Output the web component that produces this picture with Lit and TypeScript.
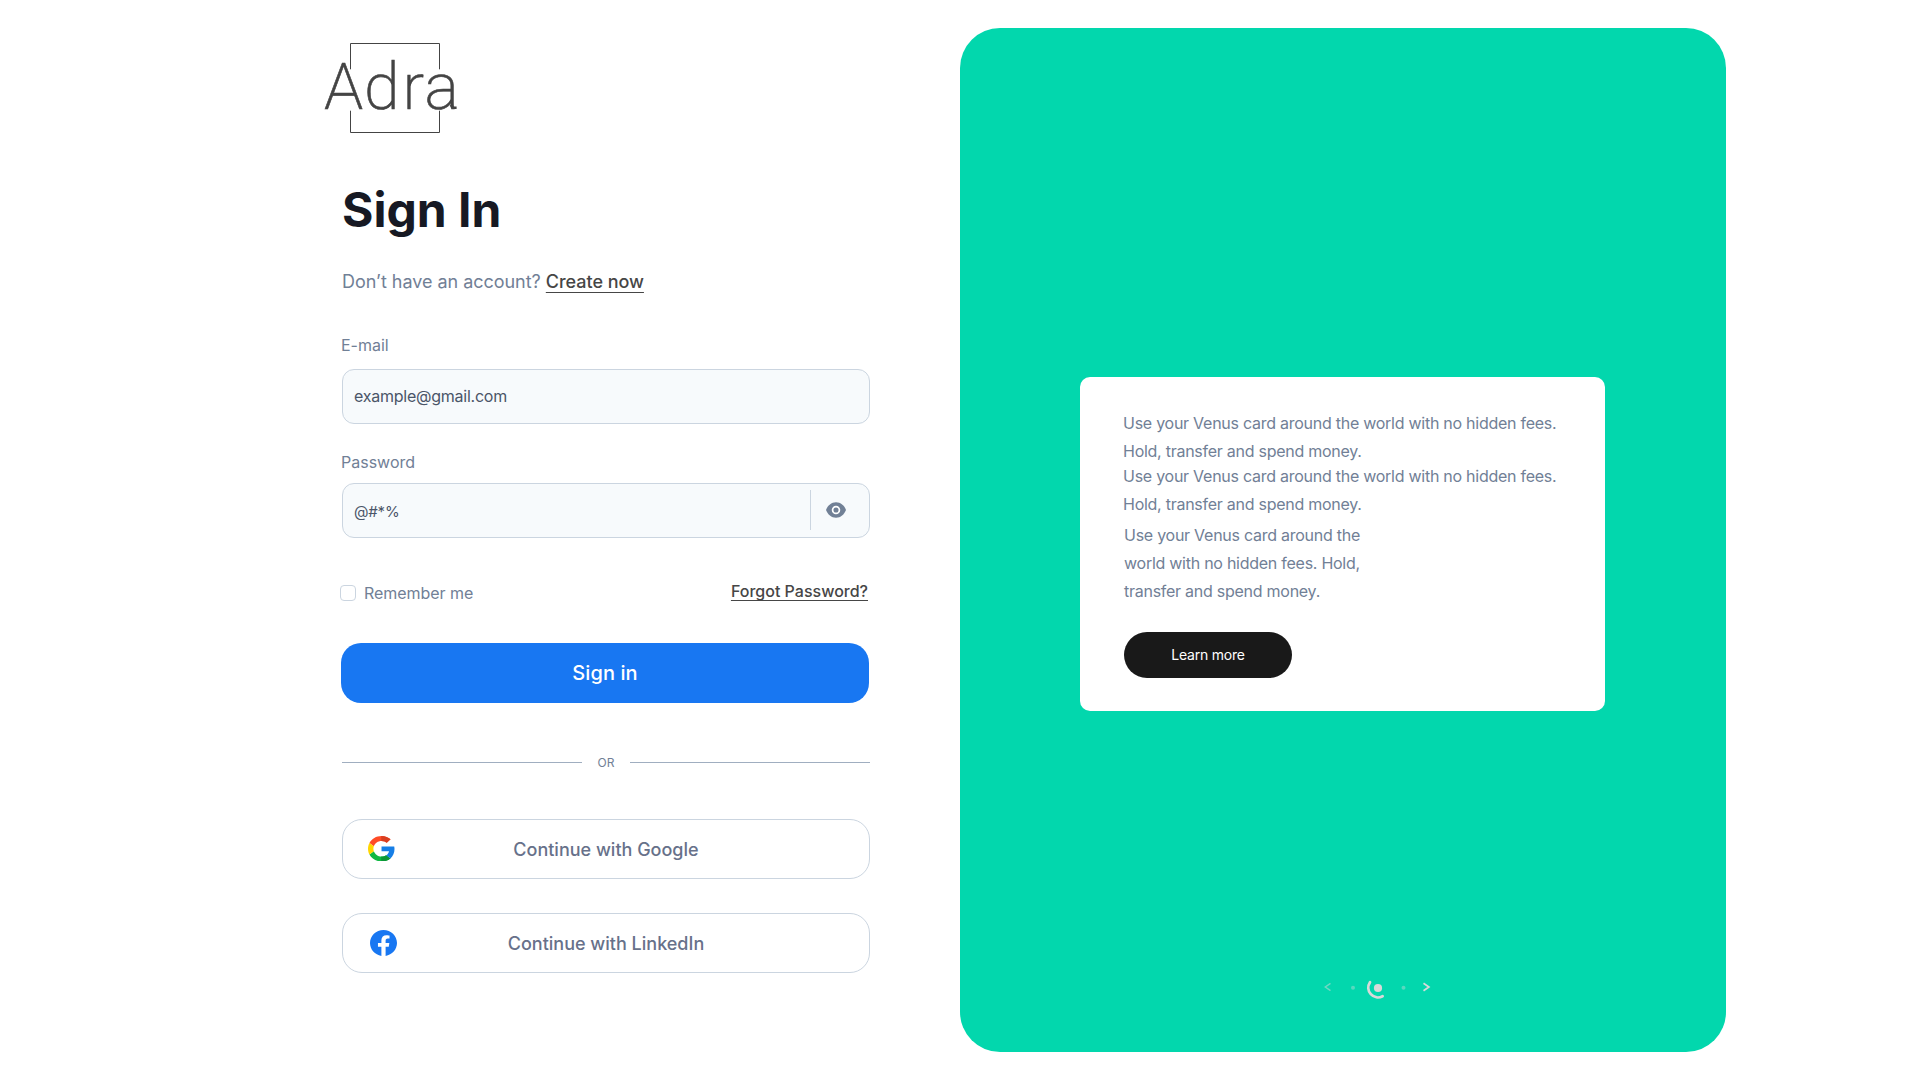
import { LitElement, html, css } from "lit";
import { customElement } from "lit/decorators.js";

const FEES = "Use your Venus card around the world with no hidden fees. Hold, transfer and spend money.";

const RED_ARC =
  "M16.2864 7.4133C18.9689 7.4133 20.7784 8.54885 21.8102 9.4978L25.8419 5.64C23.3658 3.38445 20.1435 2 16.2864 2C10.699 2 5.8736 5.1422 3.52441 9.7155L8.14345 13.2311C9.30229 9.85555 12.5086 7.4133 16.2864 7.4133Z";
const GREEN_ARC =
  "M16.2863 29.9998C20.1434 29.9998 23.3814 28.7553 25.7466 26.6086L21.2386 23.1863C20.0323 24.0108 18.4132 24.5863 16.2863 24.5863C12.5086 24.5863 9.30225 22.1441 8.15929 18.7686L3.52441 22.2841C5.87359 26.8574 10.699 29.9998 16.2863 29.9998Z";

const googleIcon = html`
  <svg class="google" viewBox="2 2 28 28" preserveAspectRatio="none" aria-hidden="true">
    <defs>
      <clipPath id="right"><rect x="16" y="0" width="16" height="32"></rect></clipPath>
    </defs>
    <path d=${RED_ARC} fill="#FF4B26"></path>
    <path d=${RED_ARC} fill="#D93F21" clip-path="url(#right)"></path>
    <path d=${GREEN_ARC} fill="#0FB842"></path>
    <path d=${GREEN_ARC} fill="#0C9637" clip-path="url(#right)"></path>
    <path fill="#FFD500" d="M8.15964 18.769C7.85806 17.8979 7.68352 16.9645 7.68352 16.0001C7.68352 15.0356 7.85806 14.1023 8.14377 13.2312L3.52475 9.71556C2.55654 11.6134 2.00098 13.7445 2.00098 16.0001C2.00098 18.2556 2.55654 20.3867 3.52475 22.2845L8.15964 18.769Z"></path>
    <path fill="#167EE6" d="M30.0014 16.3109C30.0014 15.1598 29.9061 14.3198 29.6998 13.4487H16.2871V18.6442H24.1601C24.0014 19.9354 23.1442 21.8798 21.2394 23.1864L25.7474 26.6087C28.4458 24.1665 30.0014 20.5731 30.0014 16.3109Z"></path>
  </svg>`;

const facebookIcon = html`
  <svg class="facebook" viewBox="0 0 24 24" preserveAspectRatio="none" aria-hidden="true">
    <path fill="#1877F2" d="M24 12.073c0-6.627-5.373-12-12-12s-12 5.373-12 12c0 5.99 4.388 10.954 10.125 11.854v-8.385H7.078v-3.47h3.047V9.43c0-3.007 1.792-4.669 4.533-4.669 1.312 0 2.686.235 2.686.235v2.953H15.83c-1.491 0-1.956.925-1.956 1.874v2.25h3.328l-.532 3.47h-2.796v8.385C19.612 23.027 24 18.062 24 12.073z"></path>
  </svg>`;

@customElement("app-root")
export class AppRoot extends LitElement {
  static styles = css`
    :host {
      display: block;
      width: 1920px;
      height: 1080px;
      overflow: hidden;
      background: #fff;
      font-family: Inter, "Liberation Sans", sans-serif;
      font-size: 16px;
      color: #718096;
    }
    .page { display: flex; gap: 90px; padding: 28px 0 0 342px; }
    .form { width: 528px; display: flex; flex-direction: column; }
    .logo { display: block; width: 140px; height: 96px; margin: 12px 0 0 -20px; }
    .logo text { font-family: Roboto, sans-serif; font-weight: 200; font-size: 64.5px; fill: #444; stroke: #444; stroke-width: 0.6px; }
    h1 { margin: 44px 0 0; font-size: 48px; line-height: 59px; font-weight: 700; color: #171923; }
    .sub { margin-top: 29px; font-size: 18px; line-height: 27px; letter-spacing: -0.03px; }
    a {
      color: #464646;
      font-weight: 500;
      text-decoration: underline 1px;
      text-decoration-skip-ink: none;
      text-underline-offset: 4px;
    }
    .label { line-height: 20px; margin-left: -1px; }
    .label.email { margin-top: 40px; }
    .label.password { margin-top: 28px; }
    .field {
      display: flex;
      align-items: center;
      box-sizing: border-box;
      height: 55px;
      margin-top: 14px;
      padding: 0 0 1.5px 11px;
      border: 1px solid #cbd5e0;
      border-radius: 12px;
      background: #f7fafc;
      color: #4a5568;
      letter-spacing: -0.24px;
    }
    .field.secret { margin-top: 11px; padding-bottom: 0; font-size: 15px; letter-spacing: -0.2px; }
    .value { flex: 1; }
    .secret .value { padding-top: 2px; }
    .rule { width: 1px; height: 40px; margin: 0 15px 1px 0; background: #cbd5e0; }
    .eye { display: block; width: 20px; height: 16px; margin: 0 23px 1.5px 0; }
    .options { display: flex; justify-content: space-between; margin: 43px 2px 0 -2px; line-height: 20px; height: 22px; }
    .options a { text-underline-offset: 3px; }
    .remember { display: flex; align-items: center; gap: 8px; height: 20px; padding-top: 2px; letter-spacing: -0.04px; }
    .check { box-sizing: border-box; width: 16px; height: 16px; border: 1px solid #cbd5e0; border-radius: 4px; background: #fff; }
    .submit {
      display: flex;
      align-items: center;
      justify-content: center;
      width: 528px;
      height: 60px;
      margin: 40px 0 0 -1px;
      border-radius: 20px;
      background: #1877f2;
      color: #fff;
      font-size: 20px;
      font-weight: 500;
      letter-spacing: 0.1px;
    }
    .or { display: flex; align-items: center; justify-content: space-between; height: 17px; margin-top: 51px; font-size: 12px; line-height: 17px; }
    .or i { width: 240px; height: 1px; background: #a0aec0; }
    .social {
      display: grid;
      align-items: center;
      box-sizing: border-box;
      height: 60px;
      margin-top: 34px;
      border: 1px solid #cbd5e0;
      border-radius: 20px;
      font-size: 18px;
      font-weight: 500;
      color: #67718a;
    }
    .or + .social { margin-top: 48px; }
    .social > * { grid-area: 1 / 1; }
    .social span { justify-self: center; }
    .google { width: 26.5px; height: 25.5px; margin: 0 0 1px 25.3px; }
    .facebook { width: 27px; height: 26px; margin-left: 27px; }
    .panel {
      box-sizing: border-box;
      width: 766px;
      height: 1024px;
      padding: 349px 0 0 120px;
      border-radius: 40px;
      background: #02d7ad;
    }
    .card {
      box-sizing: border-box;
      width: 525px;
      height: 334px;
      padding: 32px 0 0 43px;
      border-radius: 10px;
      background: #fff;
      line-height: 28px;
      letter-spacing: -0.26px;
    }
    p { margin: 0; width: 445px; }
    p + p { margin-top: -3px; }
    p.narrow { margin: 3px 0 0 1px; width: 242px; }
    .more {
      display: flex;
      align-items: center;
      justify-content: center;
      width: 168px;
      height: 46px;
      margin: 27px 0 0 1px;
      border-radius: 23px;
      background: #191919;
      color: #fff;
      font-size: 14px;
      letter-spacing: -0.22px;
    }
    .pager { display: block; width: 114px; height: 26px; margin: 265px 0 0 240px; }
  `;

  render() {
    return html`
      <div class="page">
        <div class="form">
          <svg class="logo" viewBox="322 40 140 96">
            <path d="M350.5 69.3V43.5H439.5V69.3M350.5 110.7V132.5H439.5V110.7" fill="none" stroke="#444"></path>
            <text x="324 364 402.6 424.6" y="109">Adra</text>
            <path d="M451.2 104.8Q451.4 107.7 454 107.7H456.6" fill="none" stroke="#444" stroke-width="2.4"></path>
          </svg>
          <h1>Sign In</h1>
          <div class="sub">Don’t have an account? <a>Create now</a></div>
          <div class="label email">E-mail</div>
          <div class="field"><span class="value">example@gmail.com</span></div>
          <div class="label password">Password</div>
          <div class="field secret">
            <span class="value">@#*%</span>
            <span class="rule"></span>
            <svg class="eye" viewBox="0 0 20 16" aria-hidden="true">
              <path fill="#718096" d="M10 .3C5.4.3 1.7 3.5 0 8c1.7 4.5 5.4 7.7 10 7.7S18.3 12.5 20 8C18.3 3.5 14.6.3 10 .3Z"></path>
              <circle cx="10" cy="8" r="3.4" fill="none" stroke="#fff" stroke-width="1.7"></circle>
            </svg>
          </div>
          <div class="options">
            <div class="remember"><span class="check"></span><span>Remember me</span></div>
            <a>Forgot Password?</a>
          </div>
          <div class="submit">Sign in</div>
          <div class="or"><i></i><span>OR</span><i></i></div>
          <div class="social">${googleIcon}<span>Continue with Google</span></div>
          <div class="social">${facebookIcon}<span>Continue with LinkedIn</span></div>
        </div>
        <div class="panel">
          <div class="card">
            <p>${FEES}</p>
            <p>${FEES}</p>
            <p class="narrow">${FEES}</p>
            <div class="more">Learn more</div>
          </div>
          <svg class="pager" viewBox="1320 976 114 26" fill="none" stroke="#D9D9D9" aria-hidden="true">
            <path d="M1330.5 983.3L1325.3 987L1330.5 990.7" stroke-width="1.5" opacity=".5"></path>
            <circle cx="1353" cy="987.7" r="2" fill="#D9D9D9" stroke="none" opacity=".4"></circle>
            <path d="M1370 982.2A9.7 9.7 0 0 0 1382.6 996.2" stroke-width="2.8" stroke-linecap="round"></path>
            <circle cx="1378" cy="988" r="4.1" fill="#D9D9D9" stroke="none"></circle>
            <circle cx="1403.5" cy="987.7" r="2" fill="#D9D9D9" stroke="none" opacity=".4"></circle>
            <path d="M1423.5 983.3L1428.9 987L1423.5 990.7" stroke-width="1.7"></path>
          </svg>
        </div>
      </div>
    `;
  }
}
